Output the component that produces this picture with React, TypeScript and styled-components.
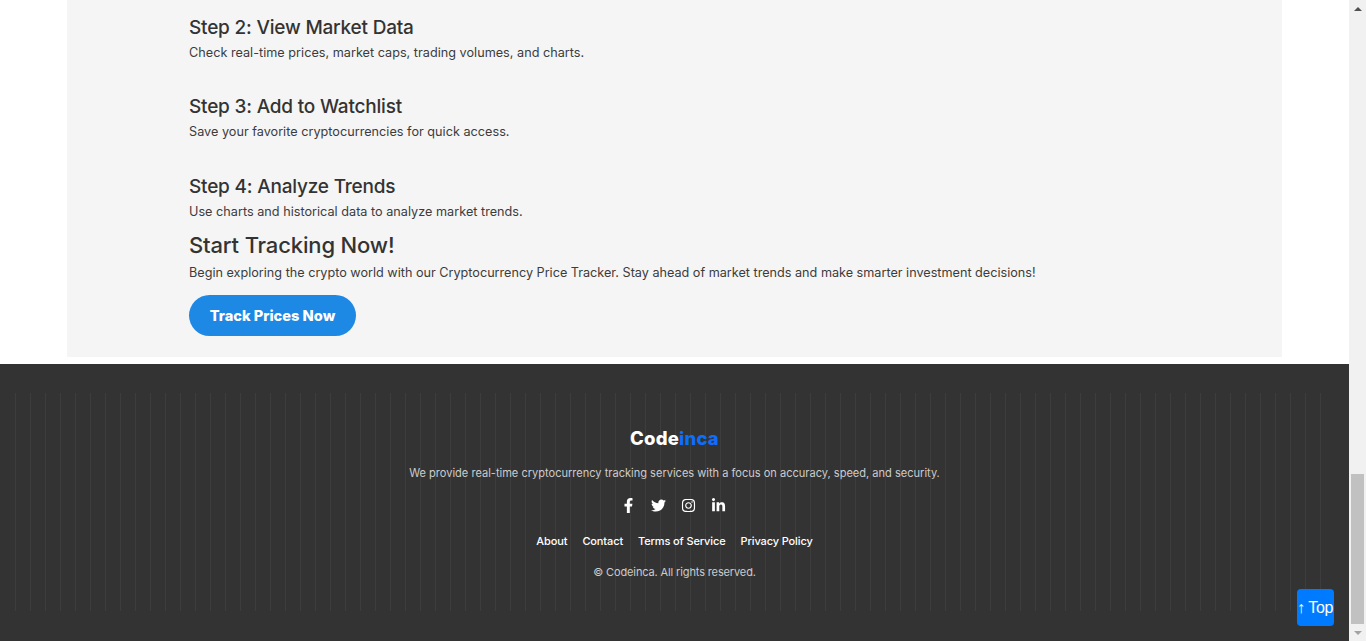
import { createGlobalStyle } from "styled-components";
import styled from "styled-components";
import { FaFacebookF, FaTwitter, FaInstagram, FaLinkedinIn } from "react-icons/fa";

const GlobalStyle = createGlobalStyle`
  html, body {
    margin: 0;
    padding: 0;
    height: 641px;
    overflow: hidden;
    background: #fff;
  }
`;

const steps = [
  { title: "Step 2: View Market Data", text: "Check real-time prices, market caps, trading volumes, and charts." },
  { title: "Step 3: Add to Watchlist", text: "Save your favorite cryptocurrencies for quick access." },
  { title: "Step 4: Analyze Trends", text: "Use charts and historical data to analyze market trends." },
];

function App() {
  return (
    <Page>
      <GlobalStyle />
      <Main>
        <Panel>
          {steps.map((step) => (
            <Step key={step.title}>
              <StepTitle>{step.title}</StepTitle>
              <StepText>{step.text}</StepText>
            </Step>
          ))}
          <Heading>Start Tracking Now!</Heading>
          <Text>
            Begin exploring the crypto world with our Cryptocurrency Price Tracker. Stay ahead of market trends and make smarter investment decisions!
          </Text>
          <Cta>Track Prices Now</Cta>
        </Panel>
        <Footer>
          <Stripes>
            <Logo>
              Code<span>inca</span>
            </Logo>
            <Tagline>We provide real-time cryptocurrency tracking services with a focus on accuracy, speed, and security.</Tagline>
            <Socials>
              <FaFacebookF size={15} />
              <FaTwitter size={15} />
              <FaInstagram size={15} />
              <FaLinkedinIn size={15} />
            </Socials>
            <Links>
              <a>About</a>
              <a>Contact</a>
              <a>Terms of Service</a>
              <a>Privacy Policy</a>
            </Links>
            <Copy>© Codeinca. All rights reserved.</Copy>
          </Stripes>
          <TopBtn>↑ Top</TopBtn>
        </Footer>
      </Main>
      <Scrollbar>
        <Arrow $up />
        <Track>
          <Thumb />
        </Track>
        <Arrow />
      </Scrollbar>
    </Page>
  );
}

const Page = styled.div`
  display: flex;
  width: 1366px;
  height: 641px;
  overflow: hidden;
  font-family: Inter, "Noto Sans", sans-serif;
`;

const Main = styled.div`
  width: 1349px;
  display: flex;
  flex-direction: column;
`;

const Panel = styled.section`
  width: 1215px;
  height: 357px;
  margin: 0 0 7px 67px;
  padding: 15.5px 0 0 122px;
  box-sizing: border-box;
  background: #f5f5f5;
  color: #333;
`;

const Step = styled.div`
  height: 79.5px;
`;

const StepTitle = styled.h3`
  margin: 0 0 3px;
  font-size: 19px;
  line-height: 24px;
  font-weight: 500;
  letter-spacing: -0.2px;
  color: #333;
`;

const Text = styled.p`
  margin: 0;
  font-size: 12.65px;
  line-height: 20px;
  color: #3c3c3c;
`;

const StepText = styled(Text)`
  letter-spacing: 0.02px;
`;

const Heading = styled.h2`
  margin: -25.5px 0 1px;
  font-size: 22px;
  line-height: 33px;
  font-weight: 500;
  letter-spacing: -0.15px;
  color: #333;
`;

const Cta = styled.button`
  display: block;
  width: 167px;
  height: 41px;
  margin-top: 12px;
  padding: 2px 0 0;
  border: none;
  border-radius: 21px;
  background: #1e88e5;
  color: #fff;
  font: 800 14.6px Inter, sans-serif;
`;

const Footer = styled.footer`
  position: relative;
  flex: 1;
  padding: 29px 15px 0;
  background: #333;
`;

const Stripes = styled.div`
  height: 218px;
  padding-top: 34px;
  box-sizing: border-box;
  display: flex;
  flex-direction: column;
  align-items: center;
  background-image: repeating-linear-gradient(
    90deg,
    #3d3d3d 0,
    #3d3d3d 1px,
    transparent 1px,
    transparent 15px
  );
`;

const Logo = styled.div`
  font-size: 18.5px;
  line-height: 22px;
  font-weight: 800;
  letter-spacing: 0.2px;
  color: #fff;
  span {
    color: #0d6efd;
  }
`;

const Tagline = styled.p`
  margin: 15px 0 0;
  font-size: 11.05px;
  line-height: 18px;
  color: #ccc;
`;

const Socials = styled.div`
  display: flex;
  gap: 15px;
  margin-top: 13px;
  padding-right: 2px;
  height: 20px;
  align-items: center;
  color: #fff;
`;

const Links = styled.nav`
  display: flex;
  gap: 15px;
  margin-top: 17px;
  font-size: 11px;
  font-weight: 500;
  letter-spacing: -0.12px;
  line-height: 18px;
  color: #fff;
`;

const Copy = styled.p`
  margin: 13px 0 0;
  font-size: 11px;
  letter-spacing: -0.13px;
  line-height: 18px;
  color: #ccc;
`;

const TopBtn = styled.button`
  position: absolute;
  right: 15px;
  bottom: 15px;
  width: 37px;
  height: 37px;
  padding: 0 2px 0 0;
  border: none;
  border-radius: 4px;
  background: #007bff;
  color: #fff;
  font: 16px "Liberation Sans", sans-serif;
  letter-spacing: -0.4px;
  white-space: nowrap;
`;

const Scrollbar = styled.div`
  width: 17px;
  display: flex;
  flex-direction: column;
  background: #f1f1f1;
`;

const Track = styled.div`
  flex: 1;
  display: flex;
  flex-direction: column;
  justify-content: flex-end;
`;

const Thumb = styled.div`
  height: 150px;
  margin: 0 2px;
  background: #c1c1c1;
`;

const Arrow = styled.div<{ $up?: boolean }>`
  height: 17px;
  display: flex;
  align-items: center;
  justify-content: center;
  &::before {
    content: "";
    border-left: 4px solid transparent;
    border-right: 4px solid transparent;
    ${(p) => (p.$up ? "border-bottom: 4px solid #505050;" : "border-top: 4px solid #a3a3a3;")}
  }
`;

export default App;
